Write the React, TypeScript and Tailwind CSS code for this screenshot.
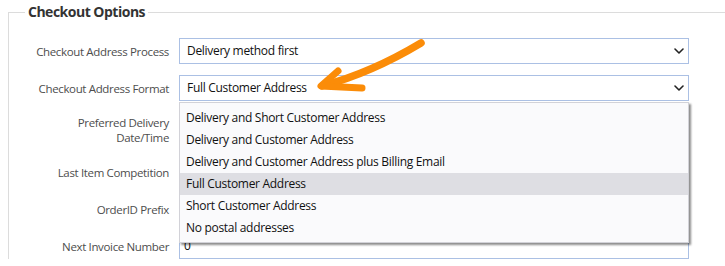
import React from "react";

const Chevron = () => (
  <svg width="10" height="6" viewBox="0 0 10 6" className="shrink-0">
    <path d="M1 1 L5 5 L9 1" fill="none" stroke="#222" strokeWidth="1.6" strokeLinecap="round" strokeLinejoin="round" />
  </svg>
);

const labelCls =
  "w-[144px] shrink-0 text-right text-[11.5px] tracking-[-0.35px] leading-[15px] text-[#4d4d4d]";

const ctrlText = "text-[12px] tracking-[-0.3px] text-[#111]";

function SelectBox({ value }: { value: string }) {
  return (
    <div className="w-[510px] h-[26px] border border-[#abc0e4] bg-white flex items-center justify-between pl-[7px] pr-[4px]">
      <span className={ctrlText}>{value}</span>
      <Chevron />
    </div>
  );
}

const options = [
  "Delivery and Short Customer Address",
  "Delivery and Customer Address",
  "Delivery and Customer Address plus Billing Email",
  "Full Customer Address",
  "Short Customer Address",
  "No postal addresses",
];

export default function App() {
  return (
    <div
      className="relative w-[725px] h-[266px] overflow-hidden bg-white"
      style={{ fontFamily: '"Open Sans", "Noto Sans", sans-serif' }}
    >
      <fieldset className="ml-[8px] w-[820px] min-w-0 border-l border-t border-[#dcdcdc] pl-[16px] pt-[14px] m-0">
        <legend className="px-[3px] text-[14px] tracking-[-0.5px] leading-[24px] font-bold text-[#333]">
          Checkout Options
        </legend>
        <div className="flex flex-col gap-[11px]">
          <div className="flex items-center gap-[10px]">
            <div className={labelCls}>Checkout Address Process</div>
            <SelectBox value="Delivery method first" />
          </div>
          <div className="flex items-center gap-[10px]">
            <div className={labelCls}>Checkout Address Format</div>
            <SelectBox value="Full Customer Address" />
          </div>
          <div className="flex items-center gap-[10px] h-[36px]">
            <div className={labelCls}>
              Preferred Delivery
              <br />
              Date/Time
            </div>
            <div className="w-[510px] h-[36px]" />
          </div>
          <div className="flex items-center gap-[10px] h-[26px]">
            <div className={labelCls}>Last Item Competition</div>
            <div className="w-[510px] h-[26px]" />
          </div>
          <div className="flex items-center gap-[10px] h-[26px]">
            <div className={labelCls}>OrderID Prefix</div>
            <div className="w-[510px] h-[26px]" />
          </div>
          <div className="flex items-center gap-[10px]">
            <div className={labelCls}>Next Invoice Number</div>
            <div className="w-[510px] h-[26px] border border-[#abc0e4] bg-white flex items-center pl-[4px]">
              <span className={ctrlText}>0</span>
            </div>
          </div>
        </div>
      </fieldset>

      {/* open dropdown list */}
      <div className="absolute left-[179px] top-[102px] w-[510px] border border-[#d2d2d8] bg-[#fafafc] pt-[4px] pb-[3px] shadow-[2px_2px_2px_rgba(0,0,0,0.45)]">
        {options.map((o) => (
          <div
            key={o}
            className={
              "h-[22px] flex items-center pl-[6px] " +
              ctrlText +
              (o === "Full Customer Address" ? " bg-[#dedee3]" : "")
            }
          >
            {o}
          </div>
        ))}
      </div>

      {/* orange annotation arrow */}
      <svg className="absolute left-0 top-0 pointer-events-none" width="725" height="266" viewBox="0 0 725 266">
        <path d="M421 43 Q371 73 322 86" fill="none" stroke="#fb8c08" strokeWidth="7.5" strokeLinecap="round" />
        <path d="M338 71 L321 86 L362 88" fill="none" stroke="#fb8c08" strokeWidth="7" strokeLinecap="round" strokeLinejoin="round" />
      </svg>
    </div>
  );
}
